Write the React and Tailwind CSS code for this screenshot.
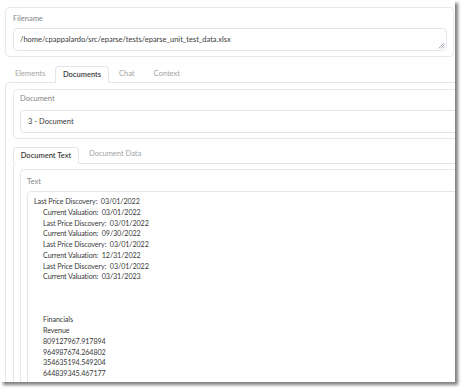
import React from 'react';

const FONT = { fontFamily: 'Lato, "Open Sans", sans-serif' };

const LINES = [
  { t: 'Last Price Discovery:  03/01/2022', indent: false },
  { t: 'Current Valuation:  03/01/2022', indent: true },
  { t: 'Last Price Discovery:  03/01/2022', indent: true },
  { t: 'Current Valuation:  09/30/2022', indent: true },
  { t: 'Last Price Discovery:  03/01/2022', indent: true },
  { t: 'Current Valuation:  12/31/2022', indent: true },
  { t: 'Last Price Discovery:  03/01/2022', indent: true },
  { t: 'Current Valuation:  03/31/2023', indent: true },
  { t: '', indent: true },
  { t: '', indent: true },
  { t: '', indent: true },
  { t: 'Financials', indent: true },
  { t: 'Revenue', indent: true },
  { t: '809127967.917894', indent: true },
  { t: '964987674.264802', indent: true },
  { t: '354635194.549204', indent: true },
  { t: '644839345.467177', indent: true },
];

const ResizeHandle = () => (
  <svg width="7" height="7" viewBox="0 0 7 7" className="absolute right-[1px] bottom-[1px]">
    <path d="M6.5 0.5 L0.5 6.5 M6.5 2.5 L2.5 6.5 M6.5 4.5 L4.5 6.5" stroke="#9ca3af" strokeWidth="0.8" />
  </svg>
);

export default function App() {
  return (
    <div className="w-[463px] h-[390px] bg-white" style={FONT}>
      <div className="w-[455px] h-[382px] bg-white overflow-hidden shadow-[3px_3px_3px_rgba(0,0,0,0.5)] pt-[7px] pl-[5px]">
        {/* Filename */}
        <div className="w-[449px] h-[50px] border border-[#e8e8e8] rounded-[4px] px-[7px] pt-[6px]">
          <div className="text-[7.5px] leading-[10px] text-[#858585]">Filename</div>
          <div className="relative mt-[4px] w-[434px] h-[23px] border border-[#e6e6e6] rounded-[4px] pl-[6px] flex items-center text-[7.5px] text-[#3a3a3a]">
            /home/cpappalardo/src/eparse/tests/eparse_unit_test_data.xlsx
            <ResizeHandle />
          </div>
        </div>

        {/* Top tabs */}
        <div className="mt-[9px] flex items-end h-[16px] text-[7.5px]">
          <div className="w-[50px] pl-[10px] pb-[3px] text-[#a3a3a3]">Elements</div>
          <div className="w-[54px] h-[17px] -mb-px border border-b-0 border-[#e6e6e6] rounded-t-[4px] bg-white flex items-center justify-center text-[#3a3a3a] font-semibold relative z-10">
            Documents
          </div>
          <div className="pl-[10px] pb-[3px] text-[#a3a3a3]">Chat</div>
          <div className="pl-[19px] pb-[3px] text-[#a3a3a3]">Context</div>
        </div>

        {/* Documents panel */}
        <div className="w-[520px] border border-[#e6e6e6] rounded-[4px] pl-[7px] pt-[6px] h-[400px]">
          <div className="border border-[#e8e8e8] rounded-[4px] pl-[6px] pt-[4px] h-[50px]">
            <div className="text-[7.5px] leading-[10px] text-[#858585]">Document</div>
            <div className="mt-[6px] h-[23px] border border-[#e6e6e6] rounded-[4px] pl-[7px] flex items-center text-[7.5px] text-[#3a3a3a]">
              3 - Document
            </div>
          </div>

          {/* Inner tabs */}
          <div className="mt-[8px] flex items-end h-[16px] text-[7.5px]">
            <div className="w-[66px] h-[17px] -mb-px border border-b-0 border-[#e6e6e6] rounded-t-[4px] bg-white flex items-center justify-center text-[#3a3a3a] font-semibold relative z-10">
              Document Text
            </div>
            <div className="pl-[10px] pb-[4px] text-[#a3a3a3]">Document Data</div>
          </div>

          <div className="border border-[#e6e6e6] rounded-[4px] pl-[6px] pt-[5px] h-[300px]">
            <div className="border border-[#e8e8e8] rounded-[4px] pl-[6px] pt-[7px] h-[300px]">
              <div className="text-[7.5px] leading-[10px] text-[#858585]">Text</div>
              <div className="mt-[4px] border border-[#e6e6e6] rounded-[4px] pl-[6px] pt-[5px] h-[300px] text-[7.2px] tracking-[-0.1px] leading-[10.75px] text-[#3a3a3a]">
                {LINES.map((l, i) => (
                  <div key={i} className={`whitespace-pre h-[10.75px] ${l.indent ? 'pl-[9px]' : ''}`}>{l.t}</div>
                ))}
              </div>
            </div>
          </div>
        </div>
      </div>
    </div>
  );
}
